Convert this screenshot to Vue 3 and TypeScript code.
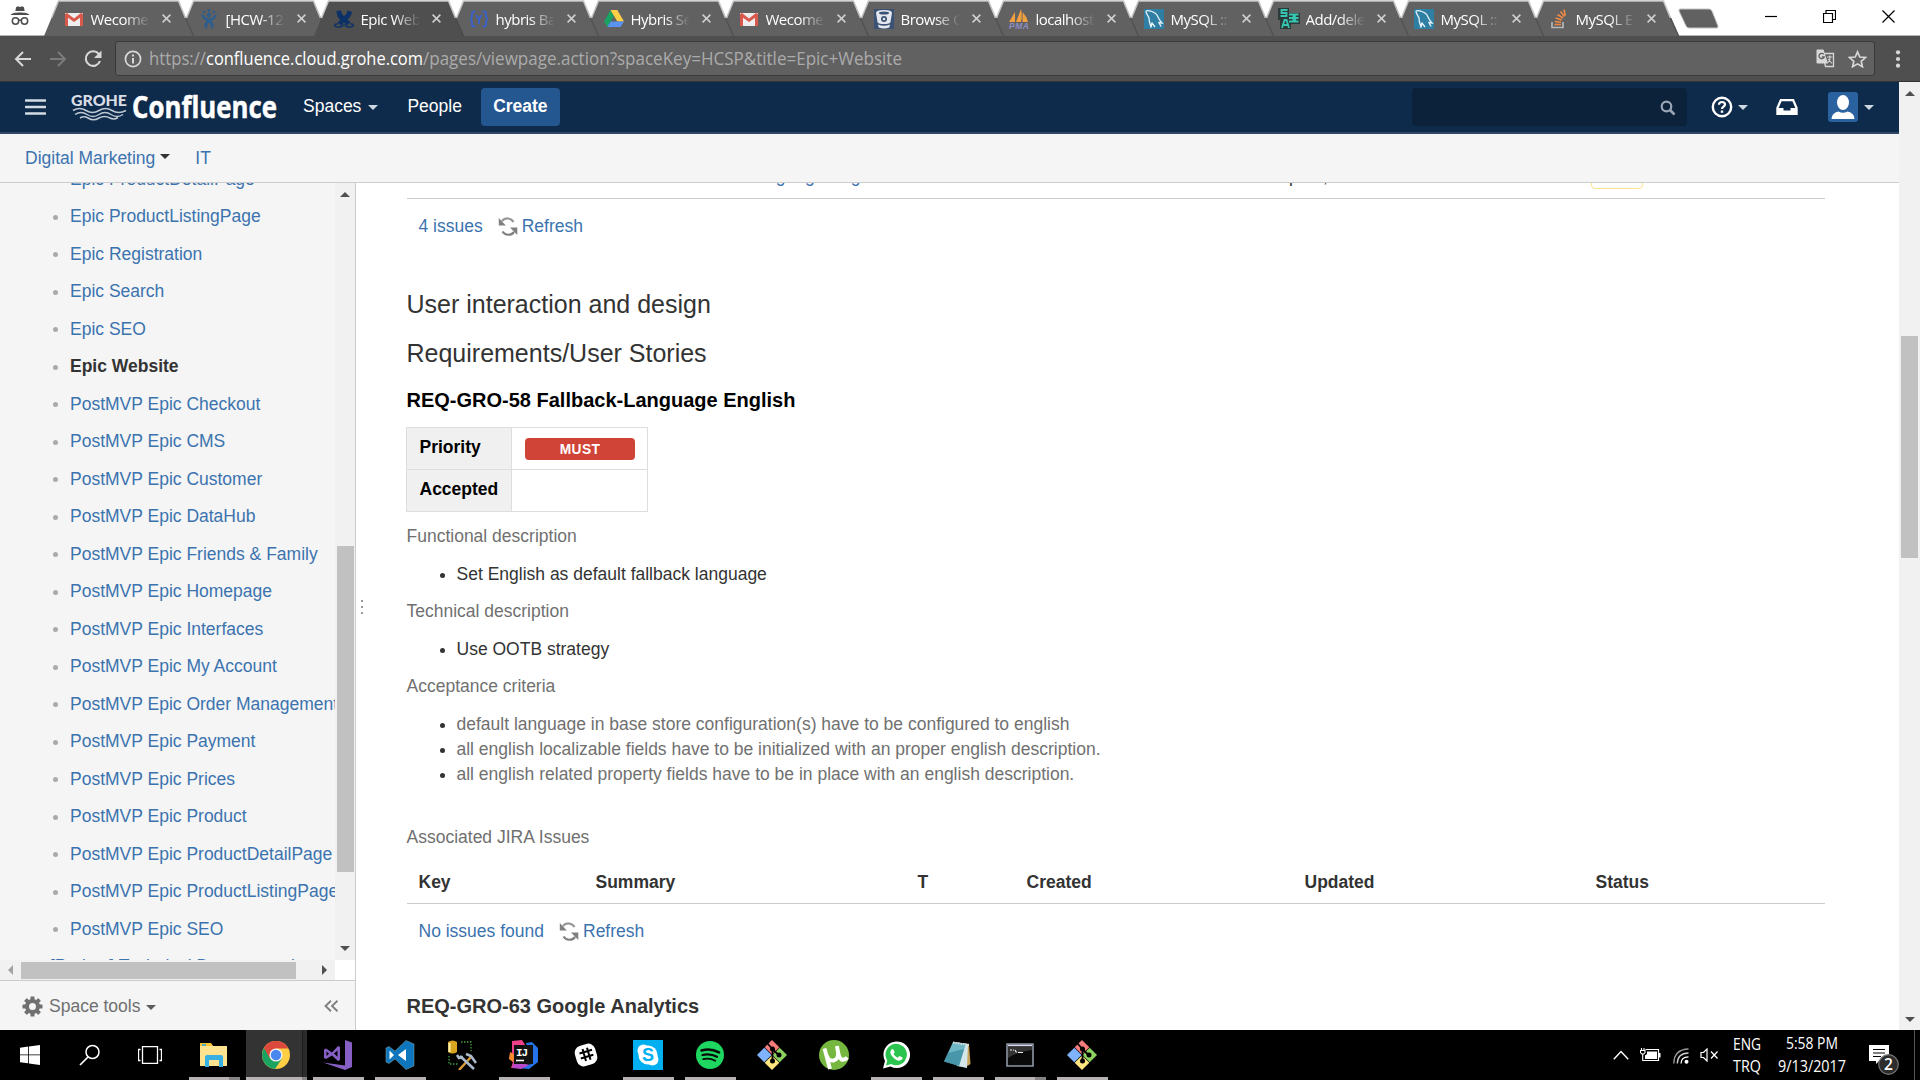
<script setup lang="ts">
interface Tab { title: string; icon: string; active?: boolean }
const tabs: Tab[] = [
  { title: 'Wecome to', icon: 'gmail' },
  { title: '[HCW-123]', icon: 'jira' },
  { title: 'Epic Website', icon: 'confluence', active: true },
  { title: 'hybris Backoffice', icon: 'hybris' },
  { title: 'Hybris Setup', icon: 'drive' },
  { title: 'Wecome to', icon: 'gmail' },
  { title: 'Browse GRO', icon: 'bitbucket' },
  { title: 'localhost /', icon: 'pma' },
  { title: 'MySQL :: My', icon: 'mysql' },
  { title: 'Add/delete', icon: 'sea' },
  { title: 'MySQL :: My', icon: 'mysql' },
  { title: 'MySQL Error', icon: 'so' },
]

const pages: string[] = [
  'Epic ProductDetailPage', 'Epic ProductListingPage', 'Epic Registration', 'Epic Search', 'Epic SEO',
  'Epic Website', 'PostMVP Epic Checkout', 'PostMVP Epic CMS', 'PostMVP Epic Customer',
  'PostMVP Epic DataHub', 'PostMVP Epic Friends & Family', 'PostMVP Epic Homepage',
  'PostMVP Epic Interfaces', 'PostMVP Epic My Account', 'PostMVP Epic Order Management',
  'PostMVP Epic Payment', 'PostMVP Epic Prices', 'PostMVP Epic Product',
  'PostMVP Epic ProductDetailPage', 'PostMVP Epic ProductListingPage', 'PostMVP Epic SEO',
]

interface Task { id: string; open?: boolean; stacked?: boolean; active?: boolean }
const tasks: Task[] = [
  { id: 'explorer', open: true, stacked: true },
  { id: 'chrome', active: true },
  { id: 'vs', open: true },
  { id: 'vscode', open: true },
  { id: 'sql' },
  { id: 'idea', open: true },
  { id: 'slack' },
  { id: 'skype', open: true },
  { id: 'spotify', open: true },
  { id: 'git' },
  { id: 'utorrent' },
  { id: 'whatsapp', open: true },
  { id: 'notepad', open: true },
  { id: 'cmd', open: true, stacked: true },
  { id: 'git', open: true },
]
</script>

<template>
  <div class="screen">
    <!-- browser tab strip -->
    <div class="tabstrip">
      <svg class="incognito" width="20" height="20" viewBox="0 0 20 20">
        <path d="M6 1.2 8 0.3 10 1l2-.7 2 .9.6 3.8H5.4z" fill="#4d4d4d" />
        <path d="M0.5 9c1.500-2 4-2.600 9.500-2.600S18 7 19.500 9z" fill="#4d4d4d" />
        <g fill="none" stroke="#4d4d4d" stroke-width="1.500"><circle cx="5.500" cy="15" r="3.200" /><circle cx="14.500" cy="15" r="3.200" /><path d="M8.600 14.300q1.400-.8 2.800 0" /></g>
      </svg>
      <div
        v-for="(t, i) in tabs" :key="i" class="tab" :class="{ active: t.active }"
        :style="{ zIndex: t.active ? 20 : 15 - i }"
      >
        <svg class="tabshape" width="152" height="36" viewBox="0 0 152 36">
          <path class="fill" d="M0 36 14.500 1H134.500L150 36z" />
          <path class="top" d="M7.500 18 14.500 1H134.500L141.500 18" />
          <path class="edge" d="M141.500 18 149.500 36" />
        </svg>
        <span class="favicon">
          <svg v-if="t.icon === 'gmail'" width="18" height="18" viewBox="0 0 18 18"><path d="M0 3h18v13H0z" fill="#eee" /><path d="M0 16V4l2-1 7 5.500L16 3l2 1v12h-3V7.800L9 12 3 7.800V16z" fill="#d9594c" /></svg>
          <svg v-else-if="t.icon === 'jira'" width="18" height="20" viewBox="0 0 18 20"><g fill="#2f5d8c"><circle cx="9" cy="6" r="2.200" /><circle cx="4" cy="3" r="1.300" /><circle cx="9" cy="1.500" r="1.400" /><circle cx="14" cy="3" r="1.300" /><path d="M1 5.500c2 0 3.500 1 4.500 3q3.500 2 7 0c1-2 2.500-3 4.500-3-.5 3-2.500 5-5 6 0 2 1 3 2 3.500l-1 4.500h-2c0-3-1-4.500-2-5.500-1 1-2 2.500-2 5.500H5l-1-4.500c1-.5 2-1.500 2-3.500-2.500-1-4.500-3-5-6z" /></g></svg>
          <svg v-else-if="t.icon === 'confluence'" width="20" height="18" viewBox="0 0 20 18"><path d="M2.500 1 7 .5C7.500 3.500 8.500 5 10 6c1.500-1 3-2.500 3.500-5.500L18 2c-.5 3.500-2.500 6-4.500 7.500 1 1 1.500 1.500 3 2.500l-3.500 3.500c-1.500-.8-2.500-2-3-3.500-.6 1.500-1.500 2.700-3 3.500L3.500 12.500c1-.5 2-1.500 2.500-3C4 8 2.500 5 2.500 1z" fill="#0b3166" /><path d="M4 14Q.5 13.500.8 15.500t5.200 1.500q2.500-.5 3.500-2.500M16 14q3.500-.5 3.200 1.500T14 17q-2.500-.5-3.500-2.500" stroke="#0b3166" stroke-width="1.500" fill="none" /></svg>
          <svg v-else-if="t.icon === 'hybris'" width="18" height="18" viewBox="0 0 18 18"><g fill="none" stroke="#3b61c4" stroke-width="2"><path d="M5.500 1.500H4q-2 0-2 2v3L.7 9 2 11.500v3q0 2 2 2h1.500M12.500 1.500H14q2 0 2 2v3L17.300 9 16 11.500v3q0 2-2 2h-1.500M6 5l3 4 3-4M9 9v5" /></g></svg>
          <svg v-else-if="t.icon === 'drive'" width="20" height="17" viewBox="0 0 20 17"><path d="M6.500 0 0 11.500 3.400 17 10 6z" fill="#1aa260" /><path d="M6.500 0h6.800L20 11.500h-6.700z" fill="#ffcf48" /><path d="M6.700 11.500H20L16.600 17H3.400z" fill="#5a92f0" /></svg>
          <svg v-else-if="t.icon === 'bitbucket'" width="20" height="20" viewBox="0 0 20 20"><path d="M0 0h20v20H0z" fill="#3a5276" /><path d="M2 4Q2 1 10 1t8 3l-1.500 9Q16 15 10 15t-6.500-2z" fill="#e4e8ee" /><path d="M4 15.500q6 2.500 12 0l-.7 3Q10 20.500 4.700 18.500z" fill="#e4e8ee" /><ellipse cx="10" cy="4" rx="5" ry="1.500" fill="#3a5276" /><circle cx="10" cy="10" r="3" fill="#3a5276" /><circle cx="10" cy="10" r="1.300" fill="#e4e8ee" /></svg>
          <svg v-else-if="t.icon === 'pma'" width="20" height="20" viewBox="0 0 20 20"><path d="M0 13 6 3v10zM7 13 12 0q1.500 7 0 13zM13.500 13V3q4 4 5.500 10z" fill="#f0a040" /><text x="0" y="20" font-family="Liberation Sans" font-weight="bold" font-style="italic" font-size="8.500" fill="#8f8fc4" textLength="20">PMA</text></svg>
          <svg v-else-if="t.icon === 'mysql'" width="20" height="20" viewBox="0 0 20 20"><path d="M0 0h20v20H0z" fill="#2f7fa5" /><path d="M2 2c3-1 9 1 11 4 2 4 2 5 5 8l-3-.5 2 4M2 2c0 3 2 4 3 7 0 4 1 6 2 9 1-1 0-3 1-4l3 4" fill="none" stroke="#e8f2f7" stroke-width="1.300" /></svg>
          <svg v-else-if="t.icon === 'sea'" width="22" height="22" viewBox="0 0 22 22"><path d="M2 0h9v5h11v11h-9v5H2v-9H0V0z" fill="#2c3a3a" /><path d="M9.500 2H3.500v3h5v3H2.500M11 6.500h4.500v7H11M11 10h4.500M20.500 6.500H17v7h3.500M17 10h3.500M4 20l2.500-8h2L11 20M5 17h5" fill="none" stroke="#36c6b0" stroke-width="1.800" /></svg>
          <svg v-else width="18" height="20" viewBox="0 0 18 20"><path d="M2 13v5.500h11V13" fill="none" stroke="#b4b6b8" stroke-width="1.700" /><path d="M4.500 15.500h6.500M4.800 12.500l6.300.8M5.600 9l6.200 1.900M7.500 5.500l5.500 3.500M10.500 2.500l4 5M14 .5l1.300 6.200" stroke="#ee8a45" stroke-width="1.600" /></svg>
        </span>
        <span class="tabtitle">{{ t.title }}</span>
        <svg class="x" width="9" height="9" viewBox="0 0 9 9"><path d="M.6.6l7.800 7.800M8.400.6.6 8.400" stroke="#d0d0d0" stroke-width="1.500" /></svg>
      </div>
      <svg class="newtab" width="44" height="22" viewBox="0 0 44 22"><path d="M3 1h29q2 0 3 2l6 15q.5 2-1.500 2H12q-2 0-3-2L2 3q-.5-2 1-2z" fill="#616161" stroke="#c4c4c4" /></svg>
      <div class="wincontrols">
        <svg width="13" height="13" viewBox="0 0 13 13"><path d="M1 6.500h12" stroke="#000" stroke-width="1.200" /></svg>
        <svg width="13" height="13" viewBox="0 0 13 13"><path d="M.5 3.500h9v9h-9zM3 3.500v-3h9.500v9h-3" fill="none" stroke="#000" stroke-width="1.200" /></svg>
        <svg width="13" height="13" viewBox="0 0 13 13"><path d="M.5.5l12 12M12.500.5l-12 12" stroke="#000" stroke-width="1.200" /></svg>
      </div>
    </div>

    <!-- address bar -->
    <div class="toolbar">
      <svg class="nav-back" width="18" height="16" viewBox="0 0 18 16"><path d="M9 1 2 8l7 7M2 8h15" fill="none" stroke="#d8d8d8" stroke-width="2" /></svg>
      <svg class="nav-fwd" width="18" height="16" viewBox="0 0 18 16"><path d="M9 1l7 7-7 7M16 8H1" fill="none" stroke="#7b7b7b" stroke-width="2" /></svg>
      <svg class="nav-reload" width="18" height="18" viewBox="0 0 18 18"><path d="M14.800 4A7.300 7.300 0 1 0 16 11" fill="none" stroke="#d8d8d8" stroke-width="2.100" /><path d="M17.500.5v7.500H10z" fill="#d8d8d8" /></svg>
      <div class="omnibox">
        <svg class="info" width="18" height="18" viewBox="0 0 18 18"><circle cx="9" cy="9" r="7.600" fill="none" stroke="#d8d8d8" stroke-width="1.700" /><path d="M8 8h2v5.500H8zM8 4.500h2v2H8z" fill="#d8d8d8" /></svg>
        <svg class="url" width="760" height="30" viewBox="0 0 760 30">
          <text class="ui dim" x="0" y="21" textLength="57" lengthAdjust="spacingAndGlyphs">https://</text>
          <text class="ui lit" x="57" y="21" textLength="217" lengthAdjust="spacingAndGlyphs">confluence.cloud.grohe.com</text>
          <text class="ui dim" x="274" y="21" textLength="479" lengthAdjust="spacingAndGlyphs">/pages/viewpage.action?spaceKey=HCSP&amp;title=Epic+Website</text>
        </svg>
        <svg class="translate" width="19" height="19" viewBox="0 0 19 19"><path d="M6.500 4.500h11v13h-8z" fill="none" stroke="#d8d8d8" stroke-width="1.300" /><path d="M1.500.5h6l4.500 14H1.500q-1 0-1-1v-12q0-1 1-1z" fill="#d8d8d8" /><path d="M7.800 5.300A2.700 2.700 0 1 0 8.200 8H5.800" fill="none" stroke="#616161" stroke-width="1.300" /><path d="M11 8h5.500M13.700 6.500V8q1 4-2 5.500M12 10l4 4.500" fill="none" stroke="#d8d8d8" stroke-width="1.100" /></svg>
        <svg class="star" width="19" height="18" viewBox="0 0 24 23"><path d="M12 2.300l2.900 6.600 7.200.7-5.400 4.800 1.600 7L12 17.700l-6.300 3.700 1.600-7L1.900 9.600l7.200-.7z" fill="none" stroke="#d8d8d8" stroke-width="2.100" /></svg>
      </div>
      <svg class="menu" width="6" height="18" viewBox="0 0 6 18"><g fill="#d8d8d8"><circle cx="3" cy="2.300" r="2.100" /><circle cx="3" cy="9" r="2.100" /><circle cx="3" cy="15.700" r="2.100" /></g></svg>
    </div>

    <div class="viewport">
      <div class="page">
        <header class="apphead">
          <svg class="burger" width="21" height="16" viewBox="0 0 21 16"><path d="M1 1.500h19M1 8h19M1 14.500h19" stroke="#d3dbe4" stroke-width="2.600" stroke-linecap="round" /></svg>
          <svg class="logo" width="208" height="34" viewBox="0 0 208 34">
            <text x="0" y="15" font-family="Lato, 'Open Sans', sans-serif" font-weight="900" font-size="14.500" fill="#d9dee6" textLength="56" lengthAdjust="spacingAndGlyphs">GROHE</text>
            <g fill="none" stroke="#bfc9d4" stroke-width="1.500"><path d="M2 19.500q6.500-4 13 0t13 0 13 0 14 0" /><path d="M4 23.500q6-4 12 0t12 0 12 0 12 0" /><path d="M9 27q4-2.500 8 0 5.500 3.500 11 0 5.500-3 11 0 4 2 8-.5" /></g>
            <text x="61" y="27" font-family="'Open Sans', sans-serif" font-weight="700" font-size="31" fill="#fff" stroke="#fff" stroke-width=".5" textLength="145" lengthAdjust="spacingAndGlyphs">Confluence</text>
          </svg>
          <a class="navlink spaces">Spaces</a><i class="caret light"></i>
          <a class="navlink people">People</a>
          <a class="create">Create</a>
          <div class="search"><svg width="16" height="16" viewBox="0 0 16 16"><circle cx="6.500" cy="6.500" r="4.800" fill="none" stroke="#9aa6b5" stroke-width="2.200" /><path d="M10 10l4.500 4.500" stroke="#9aa6b5" stroke-width="2.600" /></svg></div>
          <svg class="help" width="22" height="22" viewBox="0 0 22 22"><circle cx="11" cy="11" r="9.200" fill="none" stroke="#fff" stroke-width="2.400" /><path d="M7.900 8.800Q8 6 11 6t3 2.600c0 1.900-3 2.200-3 4.400" fill="none" stroke="#fff" stroke-width="2.200" /><path d="M9.800 14.500h2.400v2.300H9.800z" fill="#fff" /></svg>
          <i class="caret light helpcaret"></i>
          <svg class="inbox" width="22" height="16" viewBox="0 0 22 16"><path d="M4.800 1.200h12.400L20.600 9v5.800H1.400V9z" fill="none" stroke="#fff" stroke-width="2.200" /><path d="M1 9h6.500v2.500h7V9H21v7H1z" fill="#fff" /></svg>
          <svg class="avatar" width="30" height="30" viewBox="0 0 30 30"><rect width="30" height="30" rx="3" fill="#2a619f" /><ellipse cx="15" cy="10.500" rx="6" ry="7.500" fill="#fff" /><path d="M3.500 27q0-6 7-7.500 4.500 2.500 9 0 7 1.500 7 7.500z" fill="#fff" /></svg>
          <i class="caret light avcaret"></i>
        </header>
        <nav class="subnav"><a>Digital Marketing</a><i class="caret dark"></i><a class="it">IT</a></nav>

        <div class="body">
          <aside class="sidebar">
            <div class="treewrap">
              <div class="tree">
                <ul>
                  <li v-for="p in pages" :key="p" :class="{ current: p === 'Epic Website' }">{{ p }}</li>
                </ul>
                <div class="project">[Project] Technical Documentation</div>
              </div>
              <div class="vbar"><i class="up"></i><div class="vthumb"></div><i class="down"></i></div>
            </div>
            <div class="hrow">
              <div class="hbar"><i class="left"></i><div class="hthumb"></div><i class="right"></i></div>
              <div class="corner"></div>
            </div>
            <div class="tools">
              <svg width="21" height="21" viewBox="-10.500 -10.500 21 21"><g fill="#707070"><rect v-for="a in 8" :key="a" x="-2" y="-10" width="4" height="5" rx=".6" :transform="`rotate(${a * 45})`" /></g><circle r="5.500" fill="none" stroke="#707070" stroke-width="4" /></svg>
              <span>Space tools</span><i class="caret grey"></i>
              <svg class="collapse" width="15" height="12" viewBox="0 0 15 12"><path d="M7 .8 1.500 6 7 11.200M13.500.8 8 6l5.500 5.200" fill="none" stroke="#808080" stroke-width="1.900" /></svg>
            </div>
          </aside>
          <div class="splitter"><b></b><b></b><b></b></div>
          <main>
            <div class="issuerow"><span class="isum">Fallback Language English</span><span class="idate">Sep 07, 2017</span><span class="istat"></span></div>
            <div class="refresh first">
              <a>4 issues</a>
              <svg width="20" height="19" viewBox="0 0 20 19"><g fill="none" stroke="#959595" stroke-width="2.200"><path d="M15.500 5A7 7 0 0 0 4 4" /><path d="M4.500 14.500a7 7 0 0 0 11.500.5" stroke="#808080" /></g><path d="M.8 1v7.500h7zM19.300 18v-7.500h-7.300z" fill="#808080" /></svg>
              <a>Refresh</a>
            </div>
            <h2 class="first">User interaction and design</h2>
            <h2>Requirements/User Stories</h2>
            <h3>REQ-GRO-58 Fallback-Language English</h3>
            <div class="reqtable">
              <div class="th">Priority</div><div class="td"><span class="badge">MUST</span></div>
              <div class="th">Accepted</div><div class="td"></div>
            </div>
            <h5>Functional description</h5>
            <ul><li>Set English as default fallback language</li></ul>
            <h5>Technical description</h5>
            <ul><li>Use OOTB strategy</li></ul>
            <h5>Acceptance criteria</h5>
            <ul class="grey">
              <li>default language in base store configuration(s) have to be configured to english</li>
              <li>all english localizable fields have to be initialized with an proper english description.</li>
              <li>all english related property fields have to be in place with an english description.</li>
            </ul>
            <h5 class="assoc">Associated JIRA Issues</h5>
            <div class="jirahead"><span>Key</span><span>Summary</span><span>T</span><span>Created</span><span>Updated</span><span>Status</span></div>
            <div class="refresh second">
              <a>No issues found</a>
              <svg width="20" height="19" viewBox="0 0 20 19"><g fill="none" stroke="#959595" stroke-width="2.200"><path d="M15.500 5A7 7 0 0 0 4 4" /><path d="M4.500 14.500a7 7 0 0 0 11.500.5" stroke="#808080" /></g><path d="M.8 1v7.500h7zM19.300 18v-7.500h-7.300z" fill="#808080" /></svg>
              <a>Refresh</a>
            </div>
            <h3 class="last">REQ-GRO-63 Google Analytics</h3>
          </main>
        </div>
      </div>
      <div class="pagebar"><i class="up"></i><div class="pthumb"></div><i class="down"></i></div>
    </div>

    <!-- taskbar -->
    <footer class="taskbar">
      <div class="sys"><svg width="20" height="20" viewBox="0 0 20 20"><path d="M0 2.700 8.200 1.600v7.800H0zM9 1.500 20 0v9.400H9zM0 10.300h8.200v8L0 17.200zM9 10.300h11V20L9 18.400z" fill="#fff" /></svg></div>
      <div class="sys"><svg width="22" height="22" viewBox="0 0 22 22"><circle cx="13.500" cy="8" r="6.500" fill="none" stroke="#fff" stroke-width="1.500" /><path d="M9 13 1 21" stroke="#fff" stroke-width="1.700" /></svg></div>
      <div class="sys"><svg width="24" height="18" viewBox="0 0 24 18"><path d="M4.500.5h15v17h-15zM2.500 3.500h-2v11h2M21.500 3.500h2v11h-2" fill="none" stroke="#fff" stroke-width="1.300" /></svg></div>
      <div class="tasks">
        <div v-for="(t, i) in tasks" :key="i" class="task" :class="{ open: t.open, stacked: t.stacked, on: t.active }">
          <svg v-if="t.id === 'explorer'" width="30" height="30" viewBox="0 0 30 30"><path d="M1 4h11l2 2h14v20H1z" fill="#ffe391" /><path d="M1 3h11l2 3H1z" fill="#f7c331" /><path d="M3 4h4v2H3z" fill="#5ab" /><path d="M6 17q0-2 2-2h14q2 0 2 2v10h-4v-7H10v7H6z" fill="#38b0e3" /></svg>
          <svg v-else-if="t.id === 'chrome'" width="28" height="28" viewBox="0 0 28 28"><circle cx="14" cy="14" r="14" fill="#ffce44" /><path d="M14 14 1.900 7A14 14 0 0 0 13 28l7-10.500z" fill="#1aa260" /><path d="M1.900 7A14 14 0 0 1 26.500 7.500H14L8 17.500z" fill="#db4a3c" /><circle cx="14" cy="14" r="6.600" fill="#f3f3f3" /><circle cx="14" cy="14" r="5.200" fill="#4a88f0" /></svg>
          <svg v-else-if="t.id === 'vs'" width="30" height="30" viewBox="0 0 30 30"><path d="M22 0l7 2.500V27l-7 3L0 22.500l22 3z" fill="#865fc5" /><path d="M17 7v13l-2 1-6-5.500L3 19l-2-1V9.500L3 8.500l6 4L15 6zM3.500 11.500v4.500l2.500-2.200zM14.500 10.500l-3.500 3 3.500 3.200z" fill="#865fc5" fill-rule="evenodd" /></svg>
          <svg v-else-if="t.id === 'vscode'" width="30" height="30" viewBox="0 0 30 30"><path d="M21 .5 29 4v22l-8 3.500L10 19l-6 4.500-3-1.500V8l3-1.500L10 11z" fill="#0d76bd" stroke="#8aa" stroke-width=".5" /><path d="M4.500 10.500v9L9 15zM21 9l-8 6 8 6z" fill="#fff" /></svg>
          <svg v-else-if="t.id === 'sql'" width="30" height="30" viewBox="0 0 30 30"><path d="M1 2q4.500-3 9 0v10q-4.500 3-9 0z" fill="#d9a520" /><path d="M2.500 3v9" stroke="#fff2b0" stroke-width="2" /><path d="M14 2h10v9M2 16v8h9" fill="none" stroke="#3f9a3a" stroke-width="1.300" stroke-dasharray="1.500 1.500" /><path d="M24 17 12 30" stroke="#d99a38" stroke-width="2.500" /><path d="M13 16l14 13" stroke="#aab9cc" stroke-width="2.600" /><path d="M10 15l2 3 4-1M19 14l5 2 5 7" stroke="#aab9cc" stroke-width="2.600" fill="none" /></svg>
          <svg v-else-if="t.id === 'idea'" width="30" height="30" viewBox="0 0 30 30"><path d="M3 1 13 0l5 8L8 28H2l2-6-4-4 3-6z" fill="#f0408a" /><path d="M1 12l5 3-2 7-4-3z" fill="#f78b2c" /><path d="M17 3l6-1 6 6v14l-9 7L8 28l14-4z" fill="#2573e8" /><path d="M3 28l3-8 14 5-8 4z" fill="#b948c8" /><path d="M5 5h19v19H5z" fill="#111" /><text x="7" y="15.500" font-family="Liberation Mono" font-weight="bold" font-size="11" fill="#fff" textLength="12">IJ</text><path d="M7 20.500h8" stroke="#fff" stroke-width="1.600" /></svg>
          <svg v-else-if="t.id === 'slack'" width="30" height="30" viewBox="0 0 30 30"><rect x="4.500" y="4.500" width="21" height="21" rx="7" fill="#fff" transform="rotate(-17 15 15)" /><path d="M11.500 9l3.500 12M16 7.800l3.500 12M8.500 13.500l12.500-3.800M9.800 18.500l12.500-3.800" stroke="#000" stroke-width="2" /></svg>
          <svg v-else-if="t.id === 'skype'" width="30" height="30" viewBox="0 0 30 30"><path d="M0 0h30v30H0z" fill="#00aff0" /><circle cx="15" cy="15" r="9.500" fill="#fff" /><circle cx="10.500" cy="10.500" r="6" fill="#fff" /><circle cx="19.500" cy="19.500" r="6" fill="#fff" /><text x="15" y="21.300" text-anchor="middle" font-family="Liberation Sans" font-weight="bold" font-size="18" fill="#00aff0">S</text></svg>
          <svg v-else-if="t.id === 'spotify'" width="28" height="28" viewBox="0 0 28 28"><circle cx="14" cy="14" r="14" fill="#1ed760" /><g fill="none" stroke="#0a0a0a" stroke-linecap="round"><path d="M5.500 9.500q9-2.700 17.500 1.800" stroke-width="2.600" /><path d="M6.500 14q7.500-2 14.500 1.800" stroke-width="2.200" /><path d="M7.200 18.200q6.500-1.600 12 1.600" stroke-width="1.800" /></g></svg>
          <svg v-else-if="t.id === 'git'" width="30" height="30" viewBox="0 0 30 30"><path d="M15 0l7.300 7.300L15 14.600 7.700 7.300z" fill="#f77c7c" /><path d="M7.300 7.700l7.300 7.300-7.300 7.300L0 15z" fill="#80b3ff" /><path d="M22.700 7.700 30 15l-7.300 7.300-7.300-7.300z" fill="#8dd35f" /><path d="M15 15.400l7.300 7.300L15 30l-7.300-7.300z" fill="#ffe680" /><path d="M10.500 3.500 15.500 9v12M15.500 9l6 6" fill="none" stroke="#000" stroke-width="1.800" /><circle cx="15.500" cy="9" r="2.500" /><circle cx="22" cy="15" r="2.500" /><circle cx="15.500" cy="21" r="2.500" /></svg>
          <svg v-else-if="t.id === 'utorrent'" width="30" height="30" viewBox="0 0 30 30"><circle cx="15" cy="15" r="15" fill="#76b83f" /><path d="M5.500 8.500 11 29M7.500 15q2 6.500 7 5.500t4.500-8L18 6M18.800 11q1.800 9 5 8.700 3-.3 4.500-2.200" fill="none" stroke="#fff" stroke-width="3.900" /></svg>
          <svg v-else-if="t.id === 'whatsapp'" width="28" height="28" viewBox="0 0 28 28"><path d="M1 27.500 3 20A13.300 13.300 0 1 1 8.500 25.500z" fill="#fff" /><path d="M4 24.500 5.300 19.500A10.700 10.700 0 1 1 9.200 23z" fill="#2bc44f" /><path d="M9.500 8.500q1-1 2 .2l1.200 2.500-1.200 1.800q1.500 2.600 4.200 3.700l1.700-1.700 2.800 1.300q1 .8-.3 2.300-3 2.600-7.700-1.200-5.800-5-2.700-8.900z" fill="#fff" /></svg>
          <svg v-else-if="t.id === 'notepad'" width="30" height="28" viewBox="0 0 30 28"><path d="M10 1 26 3l1.500 20-3 2z" fill="#c8a35a" /><path d="M10 1 25 3 24 27 14 25z" fill="#d5e6ea" /><path d="M10 1l13 1.500L16 25 1 20.500z" fill="#6fb6c6" /><path d="M5 12l16-4-5 17L1 20.500z" fill="#2d8197" opacity=".6" /><path d="M10 1.500 26 4" stroke="#ddd" stroke-width="2" stroke-dasharray="1.500 1" /></svg>
          <svg v-else width="28" height="24" viewBox="0 0 28 24"><path d="M1 1h26v22H1z" fill="#0a0a0a" stroke="#8d98a5" stroke-width="1.600" /><path d="M2 2.500h24" stroke="#dde" stroke-width="1.500" /><path d="M2 4h24v3Q10 9 2 15z" fill="#333" /><path d="M4 7h2M7 7h1M9 7l1.500 2.500M12 9.500h5" stroke="#eee" stroke-width="1.200" /></svg>
        </div>
      </div>
      <div class="tray">
        <svg class="chev" width="16" height="10" viewBox="0 0 16 10"><path d="M.8 9.200 8 1.500l7.200 7.700" fill="none" stroke="#fff" stroke-width="1.400" /></svg>
        <svg class="bat" width="21" height="14" viewBox="0 0 21 14"><path d="M5.500 1.500h13v11h-14" fill="none" stroke="#fff" stroke-width="1.200" /><path d="M7 3.500h10v7.500H5V7.500l2-1.500zM19 5h1.500v4.500H19z" fill="#fff" /><path d="M1.500 0v2M4 0v2M.5 2.500h4.500v2L3.700 6H1.800L.5 4.500zM2.700 6v6.500H5" fill="none" stroke="#fff" stroke-width="1.100" /></svg>
        <svg class="wifi" width="16" height="16" viewBox="0 0 16 16"><g fill="none" stroke-width="1.300"><path d="M.8 15.500Q1 1.500 15.500 1" stroke="#999" /><path d="M4.300 15.500Q4.500 5.200 15.500 5" stroke="#ccc" /><path d="M8 15.500Q8 9 15.500 8.800" stroke="#fff" /></g><circle cx="13.500" cy="13.800" r="2" fill="#fff" /></svg>
        <svg class="vol" width="19" height="14" viewBox="0 0 19 14"><path d="M1 4.500h2.500L7 1v12L3.500 9.500H1z" fill="none" stroke="#fff" stroke-width="1.200" /><path d="M11 3.500l6.500 7M17.500 3.500l-6.500 7" stroke="#fff" stroke-width="1.300" /></svg>
        <svg class="clock" width="116" height="50" viewBox="0 0 116 50">
          <g class="ui tiny">
            <text x="1" y="20" textLength="28" lengthAdjust="spacingAndGlyphs">ENG</text>
            <text x="1" y="42" textLength="28" lengthAdjust="spacingAndGlyphs">TRQ</text>
            <text x="54" y="19" textLength="52" lengthAdjust="spacingAndGlyphs">5:58 PM</text>
            <text x="46" y="42" textLength="68" lengthAdjust="spacingAndGlyphs">9/13/2017</text>
          </g>
        </svg>
        <svg class="note" width="32" height="32" viewBox="0 0 32 32"><path d="M0 1h20v16H10l-3 3v-3H0z" fill="#fff" /><path d="M4 5.500h12M4 9h12M4 12.500h8" stroke="#000" stroke-width="1.200" /><circle cx="19.500" cy="20.500" r="9.800" fill="#2d2d2d" stroke="#777" stroke-width="1.200" /><text x="19.500" y="26" text-anchor="middle" font-family="'Open Sans'" font-weight="600" font-size="15.500" fill="#fff">2</text></svg>
        <span class="peek"></span>
      </div>
    </footer>
  </div>
</template>

<style>
html, body { margin: 0; overflow: hidden; }
</style>

<style scoped>
.screen { width: 1920px; height: 1080px; display: flex; flex-direction: column; overflow: hidden; background: #fff; font-family: "Liberation Sans", Arial, sans-serif; font-size: 17.5px; line-height: 25px; color: #333; }
.screen * { box-sizing: border-box; }
svg { display: block; flex: none; }

.tabstrip { position: relative; height: 36px; flex: none; display: flex; background: #fff; }
.tabstrip::after { content: ""; position: absolute; left: 0; right: 0; bottom: 0; height: 1px; background: #b5b5b5; z-index: 1; }
.incognito { margin: 6px 13.5px 0 10px; }
.tab { position: relative; width: 135px; height: 36px; flex: none; display: flex; align-items: center; padding: 1px 0 0 20px; }
.tabshape { position: absolute; left: 0; top: 0; z-index: -1; }
.tabshape .fill { fill: #616161; }
.tab.active .fill { fill: #4f4f4f; }
.tabshape .top { fill: none; stroke: #c6c6c6; stroke-width: 1.5; }
.tabshape .edge { fill: none; stroke: #525252; stroke-width: 1.5; }
.tab.active .edge { stroke: #4b4b4b; }
.favicon { width: 20px; display: flex; justify-content: center; margin-right: 7px; flex: none; }
.tabtitle { width: 58px; overflow: hidden; white-space: nowrap; font: 15px/22px "Open Sans", sans-serif; letter-spacing: -0.5px; color: #fff; -webkit-mask-image: linear-gradient(90deg, #000 58%, transparent 102%); mask-image: linear-gradient(90deg, #000 58%, transparent 102%); }
.x { margin-left: 13px; }
.newtab { margin: 8px 0 0 13px; }
.wincontrols { margin-left: auto; display: flex; gap: 46px; padding: 10px 25px 0 0; }

.toolbar { height: 46px; flex: none; display: flex; align-items: center; background: #4f4f4f; border-bottom: 1px solid #333; }
.nav-back { margin-left: 14px; }
.nav-fwd { margin-left: 17px; }
.nav-reload { margin-left: 17px; }
.omnibox { width: 1760px; height: 35px; margin-left: 13px; display: flex; align-items: center; background: #616161; border: 1px solid #393939; border-radius: 3px; }
.info { margin-left: 8px; }
.url { margin-left: 7px; }
.ui { font-family: "Open Sans", sans-serif; font-size: 18px; }
.dim { fill: #ababab; }
.lit { fill: #fff; }
.translate { margin-left: auto; }
.star { margin: 0 7px 0 13px; }
.menu { margin-left: 20px; }

.viewport { flex: 1; min-height: 0; display: flex; }
.page { width: 1899px; display: flex; flex-direction: column; }
.apphead { height: 52px; flex: none; display: flex; align-items: center; background: #0f2b4b; border-bottom: 2px solid #2e4866; }
.burger { margin-left: 25px; }
.logo { margin: 2px 0 0 25px; }
.navlink { color: #fff; margin-top: -2px; }
.spaces { margin-left: 24px; }
.people { margin-left: 30px; }
.caret { display: block; width: 0; height: 0; border: 5px solid transparent; border-bottom: 0; border-top-color: #333; flex: none; }
.caret.light { border-top-color: #cfd7e0; margin-left: 7px; }
.caret.light + .people { margin-left: 29px; }
.caret.grey { border-top-color: #5c5c5c; margin: 2px 0 0 6px; }
.caret.dark { margin: -4px 0 0 5px; }
.create { margin-left: 19px; width: 79px; height: 38px; line-height: 37px; text-align: center; background: #24568f; color: #fff; font-weight: bold; border-radius: 4px; }
.search { margin-left: auto; width: 275px; height: 38px; border-radius: 4px; background: #0c213a; display: flex; align-items: center; justify-content: flex-end; padding: 1px 11px 0 0; }
.help { margin-left: 24px; }
.caret.helpcaret { margin-left: 5px; }
.inbox { margin-left: 28px; }
.avatar { margin-left: 30px; }
.caret.avcaret { margin: 0 25px 0 6px; }
.subnav { height: 49px; flex: none; display: flex; align-items: center; padding: 0 0 0 25px; background: #f5f5f5; border-bottom: 1px solid #ccc; color: #3b73af; }
.it { margin-left: 25px; }
.body { flex: 1; min-height: 0; display: flex; }

.sidebar { width: 356px; flex: none; display: flex; flex-direction: column; background: #f5f5f5; border-right: 1px solid #ccc; }
.treewrap { flex: 1; min-height: 0; display: flex; }
.tree { width: 335px; overflow: hidden; white-space: nowrap; color: #3b73af; }
.tree ul { list-style: none; margin: -16.5px 0 0; padding: 0 0 0 53px; }
.tree li { height: 25px; margin-bottom: 12.5px; display: flex; align-items: center; }
.tree li::before { content: ""; width: 5px; height: 5px; border-radius: 50%; background: #aaa; margin: 1px 12px 0 0; flex: none; }
.tree li.current { color: #333; font-weight: bold; }
.project { padding-left: 50px; }
.vbar { width: 20px; background: #f1f1f1; display: flex; flex-direction: column; align-items: center; }
.up, .down { border: 5px solid transparent; }
.up { border-top: 0; border-bottom-color: #505050; }
.down { border-bottom: 0; border-top-color: #505050; }
.vbar .up { margin-top: 9px; }
.vthumb { width: 17px; height: 326px; margin-top: 349px; background: #c1c1c1; }
.vbar .down { margin: auto 0 9px; }
.hrow { height: 20px; flex: none; display: flex; }
.hbar { width: 335px; background: #f1f1f1; display: flex; align-items: center; }
.hthumb { width: 275px; height: 17px; background: #c1c1c1; margin-left: 8px; }
.left, .right { border: 5px solid transparent; }
.left { border-left: 0; border-right-color: #a3a3a3; margin-left: 8px; }
.right { border-right: 0; border-left-color: #505050; margin: 0 8px 0 auto; }
.corner { width: 20px; background: #fff; }
.tools { height: 50px; flex: none; display: flex; align-items: center; border-top: 1px solid #ccc; color: #707070; padding: 1px 0 0 22px; }
.tools span { margin-left: 6px; }
.collapse { margin: 0 16px 0 auto; }
.splitter { width: 14px; margin-left: -1px; padding-top: 1px; display: flex; flex-direction: column; align-items: center; justify-content: center; gap: 4px; }
.splitter b { width: 2px; height: 2px; background: #999; }

main { width: 1420px; margin-left: 36px; padding-left: 1.5px; overflow: hidden; }
.issuerow { height: 16px; border-bottom: 1px solid #ccc; display: flex; white-space: nowrap; line-height: 25px; }
.issuerow span { margin-top: -19px; height: 25px; }
.isum { margin-left: 270px; width: 591px; color: #3b73af; }
.idate { width: 323px; }
.issuerow .istat { width: 52px; height: 22px; border: 1px solid #ffe28c; border-radius: 4px; margin-top: -16px; }
.refresh { margin-top: 14.4px; height: 25px; display: flex; align-items: center; padding-left: 12px; color: #3b73af; }
.refresh.first { margin-top: 14.9px; }
.refresh.second { margin-top: 15.4px; }
.refresh svg { margin: 0 4px 0 15px; }
h2 { margin: 19px 0 0; font-size: 25px; line-height: 30px; font-weight: normal; color: #333; }
h2.first { margin-top: 50.4px; }
h3 { margin: 19.3px 0 0; font-size: 20px; line-height: 25px; color: #000; }
h3.last { margin-top: 50px; color: #333; }
.reqtable { margin: 14.4px 0 0 -1px; width: 242px; display: grid; grid-template-columns: 105px 136px; grid-template-rows: 42px 42px; border-top: 1px solid #ddd; border-left: 1px solid #ddd; }
.th, .td { border-right: 1px solid #ddd; border-bottom: 1px solid #ddd; }
.th { background: #f0f0f0; color: #000; font-weight: bold; padding: 7.5px 0 0 13px; }
.td { padding: 10px 0 0 13px; }
.badge { display: block; width: 110px; height: 22px; border-radius: 4px; background: #d04437; color: #fff; font-weight: bold; font-size: 13.75px; line-height: 23px; text-align: center; letter-spacing: .4px; padding-left: 1px; }
h5 { margin: 12.5px 0 0; font-size: 17.5px; line-height: 25px; font-weight: normal; color: #707070; }
h5.assoc { margin-top: 38px; }
main ul { margin: 12.5px 0 0; padding-left: 50px; }
main ul.grey li { color: #707070; }
main ul.grey li::marker { color: #333; }
.jirahead { margin-top: 20px; height: 33.6px; border-bottom: 1px solid #ccc; display: grid; grid-template-columns: 177px 322px 109px 278px 291px 1fr; padding-left: 12px; font-weight: bold; }
.pagebar { width: 21px; background: #f1f1f1; display: flex; flex-direction: column; align-items: center; }
.pagebar .up { margin-top: 9px; }
.pthumb { width: 17px; height: 222px; margin-top: 240px; background: #c1c1c1; }
.pagebar .down { margin: auto 0 8px; }

.taskbar { height: 50px; flex: none; display: flex; background: #000; }
.sys { width: 60px; display: flex; align-items: center; justify-content: center; }
.tasks { display: flex; margin-left: 3px; }
.task { position: relative; width: 62px; height: 50px; display: flex; align-items: center; justify-content: center; }
.task.open::after, .task.on::after { content: ""; position: absolute; left: 6px; bottom: 0; width: 51px; height: 3px; background: #b5b1b5; }
.task.stacked::after { background: linear-gradient(90deg, #b5b1b5 40px, #858385 40px); }
.task.on { background: linear-gradient(90deg, transparent 1px, #333 1px, #333 57px, #1c1c1c 57px, #1c1c1c 58px, #2b2b2b 58px); }
.task.on::after { left: 1px; width: 61px; background: linear-gradient(90deg, #b5b1b5 56px, #858385 56px); }
.tray { margin-left: auto; display: flex; align-items: flex-start; }
.chev { margin: 20px 0 0; }
.bat { margin: 18px 0 0 11px; }
.wifi { margin: 18px 0 0 12px; }
.vol { margin: 18px 0 0 11px; }
.clock { margin-left: 13px; }
.tiny { font-size: 15.5px; fill: #fff; }
.note { margin: 14px 0 0 21px; }
.peek { width: 1px; height: 50px; background: #555; margin: 0 5px 0 13px; }
</style>
